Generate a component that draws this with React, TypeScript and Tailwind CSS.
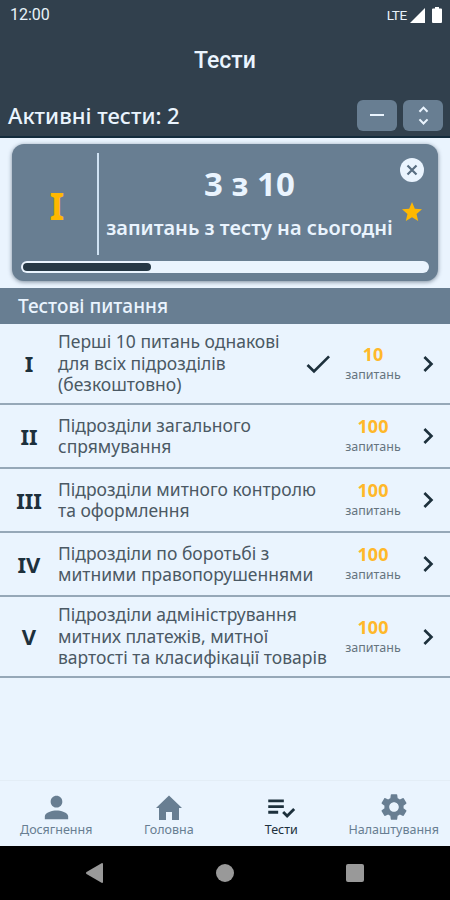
import { MdCheck, MdChevronRight, MdPerson, MdPlaylistAddCheck, MdRemove, MdSettings, MdStar, MdUnfoldMore } from 'react-icons/md';

interface Topic { numeral: string; lines: string[]; count: number; done?: boolean; height: string; }

const topics: Topic[] = [
  { numeral: 'I', lines: ['Перші 10 питань однакові', 'для всіх підрозділів', '(безкоштовно)'], count: 10, done: true, height: 'h-[81px]' },
  { numeral: 'II', lines: ['Підрозділи загального', 'спрямування'], count: 100, height: 'h-16' },
  { numeral: 'III', lines: ['Підрозділи митного контролю', 'та оформлення'], count: 100, height: 'h-16' },
  { numeral: 'IV', lines: ['Підрозділи по боротьбі з', 'митними правопорушеннями'], count: 100, height: 'h-16' },
  { numeral: 'V', lines: ['Підрозділи адміністрування', 'митних платежів, митної', 'вартості та класифікації товарів'], count: 100, height: 'h-[81px]' },
];

function StatusBar() {
  return (
    <div className="flex h-[30px] items-center justify-between pr-2 pl-2.5 font-['Roboto',sans-serif] text-[#e8f2fa]">
      <span className="text-base">12:00</span>
      <div className="flex items-center">
        <span className="text-[13.5px] tracking-[-0.3px]">LTE</span>
        <svg className="ml-[3px]" width="15" height="15" viewBox="0 0 15 15" fill="white"><path d="M15 0v15H0z" /></svg>
        <svg className="ml-[7px]" width="10" height="16" viewBox="0 0 10 16" fill="white"><path d="M3 0h4v1.500h2a1 1 0 0 1 1 1V15a1 1 0 0 1-1 1H1a1 1 0 0 1-1-1V2.500a1 1 0 0 1 1-1h2z" /></svg>
      </div>
    </div>
  );
}

function ActiveCard() {
  return (
    <section className="mx-3 mt-[6px] flex h-[137px] flex-col rounded-xl bg-[#687e92] text-[#eaf4fe] shadow-[0_1px_4px_rgba(50,70,90,0.6)]">
      <div className="flex h-[102px] w-full mt-[9px]">
        <div className="flex w-[85px] items-center justify-center pl-[5px] pt-[3px] text-[38px] font-bold text-[#ffb800]">I</div>
        <div className="w-[2px] bg-[#cfe2f3]" />
        <div className="flex w-[301px] flex-col items-center">
          <div className="mt-[9px] text-[33px] leading-[44px] font-bold">3 з 10</div>
          <div className="mt-[9px] text-[20px] leading-[26px] font-semibold whitespace-nowrap">запитань з тесту на сьогодні</div>
        </div>
        <div className="flex flex-col items-center pt-[5px]">
          <svg width="24" height="24" viewBox="0 0 24 24"><circle cx="12" cy="12" r="12" fill="#eaf4fe" /><path d="m7.500 7.500 9 9m0-9-9 9" stroke="#586e82" strokeWidth="2.200" /></svg>
          <MdStar className="mt-[18px] text-[#ffb800]" size={24} />
        </div>
      </div>
      <div className="mx-[9px] mt-[6px] h-3 rounded-full bg-[#eaf4fe] p-[2px]">
        <div className="h-2 w-[128px] rounded-full bg-[#263845]" />
      </div>
    </section>
  );
}

function TopicRow({ topic }: { topic: Topic }) {
  return (
    <div className={`flex items-center border-b-2 border-[#96a8b8] ${topic.height}`}>
      <div className="w-[58px] text-center text-[22px] font-bold text-[#1d303c]">{topic.numeral}</div>
      <div className="w-[240px] text-[17.5px] leading-[21.500px] text-[#4b5964]">
        {topic.lines.map((line) => <div key={line} className="whitespace-nowrap">{line}</div>)}
      </div>
      <div className="flex w-[40px] justify-center">{topic.done && <MdCheck className="text-[#1d303c]" size={32} />}</div>
      <div className="flex w-[70px] flex-col items-center">
        <span className="text-[18px] leading-[22px] font-bold text-[#ffb82a]">{topic.count}</span>
        <span className="text-[12.5px] leading-[20px] text-[#66747f]">запитань</span>
      </div>
      <MdChevronRight className="ml-[4px] text-[#1d303c]" size={32} />
    </div>
  );
}

function BottomTabs() {
  const label = 'text-[12.5px] leading-4 whitespace-nowrap';
  return (
    <nav className="mt-auto grid h-[66px] grid-cols-4 border-t border-[#e3edf6] text-[#687e92]">
      <div className="flex flex-col items-center pt-2.5"><MdPerson size={35} className="-mt-[1px]" /><span className={`${label} -mt-[3px]`}>Досягнення</span></div>
      <div className="flex flex-col items-center pt-2.5">
        <svg className="mt-[3px]" width="28" height="28" viewBox="0 0 28 28" fill="currentColor"><path d="M14 1.500 27 14h-3v12h-7v-8h-6v8H4V14H1z" /></svg>
        <span className={label}>Головна</span>
      </div>
      <div className="flex flex-col items-center pt-2.5 text-[#1d303c]"><MdPlaylistAddCheck size={34} /><span className={`${label} -mt-[3px]`}>Тести</span></div>
      <div className="flex flex-col items-center pt-2.5"><MdSettings size={32} /><span className={`${label} -mt-[1px]`}>Налаштування</span></div>
    </nav>
  );
}

export default function App() {
  return (
    <div className="flex h-[900px] w-[450px] flex-col overflow-hidden bg-[#eaf4fe] font-['Noto_Sans',sans-serif]">
      <header className="h-[138px] border-b-2 border-[#142c3d] bg-[#31404d] text-[#eaf4fe]">
        <StatusBar />
        <h1 className="mt-[15px] text-center font-['Roboto',sans-serif] text-[23px] leading-8 font-medium">Тести</h1>
        <div className="mt-[22px] flex h-8 items-center pr-[7px] pl-2">
          <span className="text-[22px] font-medium">Активні тести: 2</span>
          <button className="ml-auto flex h-[31px] w-10 items-center justify-center rounded-md bg-[#687e92]"><MdRemove size={24} /></button>
          <button className="ml-1.5 flex h-[31px] w-10 items-center justify-center rounded-md bg-[#687e92]"><MdUnfoldMore size={25} /></button>
        </div>
      </header>
      <ActiveCard />
      <h2 className="mt-[7px] h-9 bg-[#687e92] pl-[18px] text-[19px] leading-[37px] font-medium text-[#eaf4fe]">Тестові питання</h2>
      <div>{topics.map((topic) => <TopicRow key={topic.numeral} topic={topic} />)}</div>
      <BottomTabs />
      <footer className="flex h-[54px] items-center justify-between bg-black pr-[86px] pl-[86px]">
        <svg width="17" height="20" viewBox="0 0 17 20" fill="#999"><path d="M16 0q1 0 1 1v18q0 1-1 1L.5 11q-1-1 0-2z" /></svg>
        <div className="size-[18px] rounded-full bg-[#999]" />
        <div className="size-[18px] rounded-xs bg-[#999]" />
      </footer>
    </div>
  );
}
